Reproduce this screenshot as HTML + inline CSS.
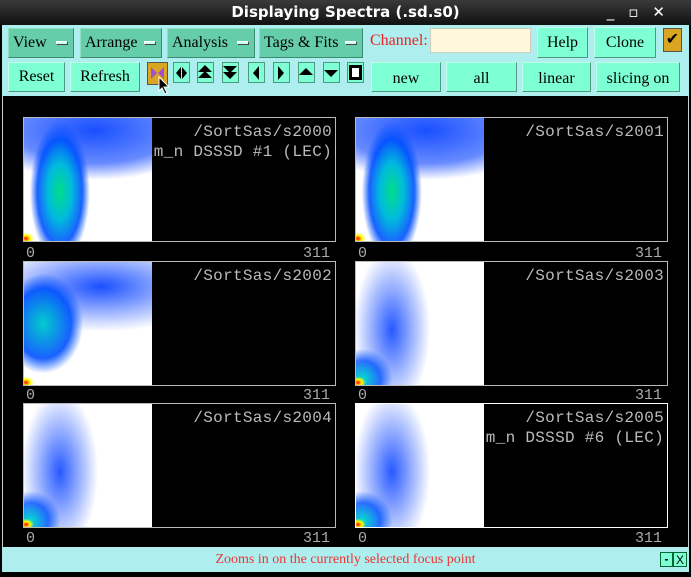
<!DOCTYPE html><html><head><style>
*{margin:0;padding:0;box-sizing:border-box}
body{width:691px;height:577px;background:#000;position:relative;overflow:hidden;font-family:"Liberation Serif",serif}
.a{position:absolute}
.tb{left:0;top:0;width:691px;height:25px;background:linear-gradient(#3a3a3a,#111);color:#fff;font:bold 15px "DejaVu Sans",sans-serif;text-align:center;line-height:25px}
.tool{left:2px;top:25px;width:687px;height:71px;background:#aeeeee}
.mb{background:#66cdaa;border:1px solid #8fe0c0;border-right-color:#3a8a70;border-bottom-color:#3a8a70;font-size:16px;line-height:27px;padding-left:4px;color:#000}
.mb i{position:absolute;right:5px;top:12px;width:12px;height:4px;background:#cfe;border:1px solid #444;border-top-color:#fff;border-left-color:#fff}
.bt{background:#7fffd4;border:1px solid #bfffe8;border-right-color:#4a9a80;border-bottom-color:#4a9a80;font-size:16px;text-align:center;color:#000}
.ib{background:#7fffd4;border:1px solid #4a9a80;width:17px;height:21px;top:62px}
.box{border:1px solid #bbb;width:313px;height:125px}
.hm{left:0;top:0;width:128px;height:100%;background:
radial-gradient(ellipse 8px 6px at 2px 98%,#f00,#ff0 50%,transparent 100%),
radial-gradient(ellipse 30px 70px at 28% 60%,#0d8 0%,#0bd 40%,rgba(0,80,255,.9) 75%,transparent 100%),
radial-gradient(ellipse 130px 55px at 55% 10%,rgba(0,60,255,.9),rgba(0,60,255,.6) 60%,transparent 90%),
#fff}
.hm2{background:radial-gradient(ellipse 8px 6px at 2px 98%,#f00,#ff0 50%,transparent 100%),radial-gradient(ellipse 30px 30px at 5% 95%,#0dc,rgba(0,80,255,.8) 60%,transparent 100%),radial-gradient(ellipse 45px 95px at 28% 55%,rgba(0,60,255,.85),transparent 85%),#fff}
.lab{font:16px "Liberation Mono",monospace;color:#bbb;right:3px;top:4px;white-space:pre;text-align:right;line-height:20px;letter-spacing:0.3px}
.ax{font:15px "Liberation Mono",monospace;color:#aaa}
.st{left:2px;top:547px;width:687px;height:25px;background:#aeeeee;color:#e33;font-size:14px;text-align:center;line-height:25px}
</style></head><body>
<div class="a tb">Displaying Spectra (.sd.s0)<span style="position:absolute;right:12px;font-weight:normal;letter-spacing:14px">_▫✕</span></div>
<div class="a tool"></div>
<div class="a mb" style="left:8px;top:28px;width:66px;height:30px">View<i></i></div>
<div class="a mb" style="left:80px;top:28px;width:82px;height:30px">Arrange<i></i></div>
<div class="a mb" style="left:167px;top:28px;width:88px;height:30px">Analysis<i></i></div>
<div class="a mb" style="left:259px;top:28px;width:104px;height:30px">Tags &amp; Fits<i></i></div>
<div class="a" style="left:370px;top:32px;color:#e22;font-size:16px">Channel:</div>
<div class="a" style="left:430px;top:28px;width:101px;height:25px;background:#fff8dc;border:1px solid #ccb"></div>
<div class="a bt" style="left:537px;top:27px;width:51px;height:31px;line-height:29px">Help</div>
<div class="a bt" style="left:594px;top:27px;width:62px;height:31px;line-height:29px">Clone</div>
<div class="a" style="left:663px;top:28px;width:19px;height:24px;background:#daa520;border:1px solid #555;text-align:center;font-size:16px;line-height:22px">✔</div>
<div class="a bt" style="left:8px;top:62px;width:57px;height:30px;line-height:28px">Reset</div>
<div class="a bt" style="left:70px;top:62px;width:70px;height:30px;line-height:28px">Refresh</div>
<div class="a" style="left:147px;top:62px;width:21px;height:23px;background:#daa520;border:1px solid #555"><svg width="19" height="21"><path d="M3 4L9 10L3 16ZM16 4L10 10L16 16Z" fill="#a050d0"/></svg></div>
<div class="a ib" style="left:173px"><svg width="15" height="19"><path d="M2 10L7 4V16ZM13 10L8 4V16Z"/></svg></div>
<div class="a ib" style="left:197px"><svg width="15" height="19"><path d="M7 2L14 9H0ZM7 8L14 15H0Z"/></svg></div>
<div class="a ib" style="left:222px"><svg width="15" height="19"><path d="M0 3H14L7 10ZM0 9H14L7 16Z"/></svg></div>
<div class="a ib" style="left:248px"><svg width="15" height="19"><path d="M4 10L10 3V17Z"/></svg></div>
<div class="a ib" style="left:273px"><svg width="15" height="19"><path d="M10 10L4 3V17Z"/></svg></div>
<div class="a ib" style="left:298px"><svg width="15" height="19"><path d="M7 5L14 12H0Z"/></svg></div>
<div class="a ib" style="left:323px"><svg width="15" height="19"><path d="M0 7H14L7 14Z"/></svg></div>
<div class="a ib" style="left:347px"><svg width="15" height="19"><rect x="1" y="2" width="13" height="15"/><rect x="4" y="5" width="7" height="9" fill="#fff"/></svg></div>
<svg class="a" style="left:158px;top:76px" width="14" height="20"><path d="M1 1V15L4 12L7 18L9 17L6 11H11Z" fill="#000" stroke="#fff"/></svg>
<div class="a bt" style="left:371px;top:62px;width:70px;height:30px;line-height:32px">new</div>
<div class="a bt" style="left:446px;top:62px;width:71px;height:30px;line-height:32px">all</div>
<div class="a bt" style="left:522px;top:62px;width:69px;height:30px;line-height:32px">linear</div>
<div class="a bt" style="left:596px;top:62px;width:84px;height:30px;line-height:32px">slicing on</div>
<div class="a" style="left:2px;top:96px;width:687px;height:451px;border-left:1px solid #ccc;border-right:1px solid #ccc"></div>

<div class="a box" style="left:23px;top:117px"><div class="a hm"></div><div class="a lab">/SortSas/s2000
m_n DSSSD #1 (LEC)</div></div>
<div class="a box" style="left:355px;top:117px"><div class="a hm"></div><div class="a lab">/SortSas/s2001</div></div>
<div class="a box" style="left:23px;top:261px"><div class="a hm" style="background:radial-gradient(ellipse 8px 6px at 2px 98%,#f00,#ff0 50%,transparent 100%),radial-gradient(ellipse 40px 50px at 15% 50%,#0cc,rgba(0,80,255,.9) 70%,transparent 100%),radial-gradient(ellipse 130px 50px at 60% 20%,rgba(0,60,255,.9),transparent 90%),#fff"></div><div class="a lab">/SortSas/s2002</div></div>
<div class="a box" style="left:355px;top:261px"><div class="a hm hm2"></div><div class="a lab">/SortSas/s2003</div></div>
<div class="a box" style="left:23px;top:403px"><div class="a hm hm2"></div><div class="a lab">/SortSas/s2004</div></div>
<div class="a box" style="left:355px;top:403px;border-color:#fff"><div class="a hm hm2"></div><div class="a lab">/SortSas/s2005
m_n DSSSD #6 (LEC)</div></div>

<div class="a ax" style="left:26px;top:245px">0</div><div class="a ax" style="left:303px;top:245px">311</div>
<div class="a ax" style="left:358px;top:245px">0</div><div class="a ax" style="left:635px;top:245px">311</div>
<div class="a ax" style="left:26px;top:387px">0</div><div class="a ax" style="left:303px;top:387px">311</div>
<div class="a ax" style="left:358px;top:387px">0</div><div class="a ax" style="left:635px;top:387px">311</div>
<div class="a ax" style="left:26px;top:530px">0</div><div class="a ax" style="left:303px;top:530px">311</div>
<div class="a ax" style="left:358px;top:530px">0</div><div class="a ax" style="left:635px;top:530px">311</div>

<div class="a st">Zooms in on the currently selected focus point</div>
<div class="a" style="left:660px;top:552px;width:13px;height:15px;background:#7fffd4;border:1px solid #063;font:bold 12px sans-serif;text-align:center;line-height:12px">-</div>
<div class="a" style="left:673px;top:552px;width:14px;height:15px;background:#7fffd4;border:1px solid #063;font:12px sans-serif;text-align:center;line-height:14px">X</div>
</body></html>
